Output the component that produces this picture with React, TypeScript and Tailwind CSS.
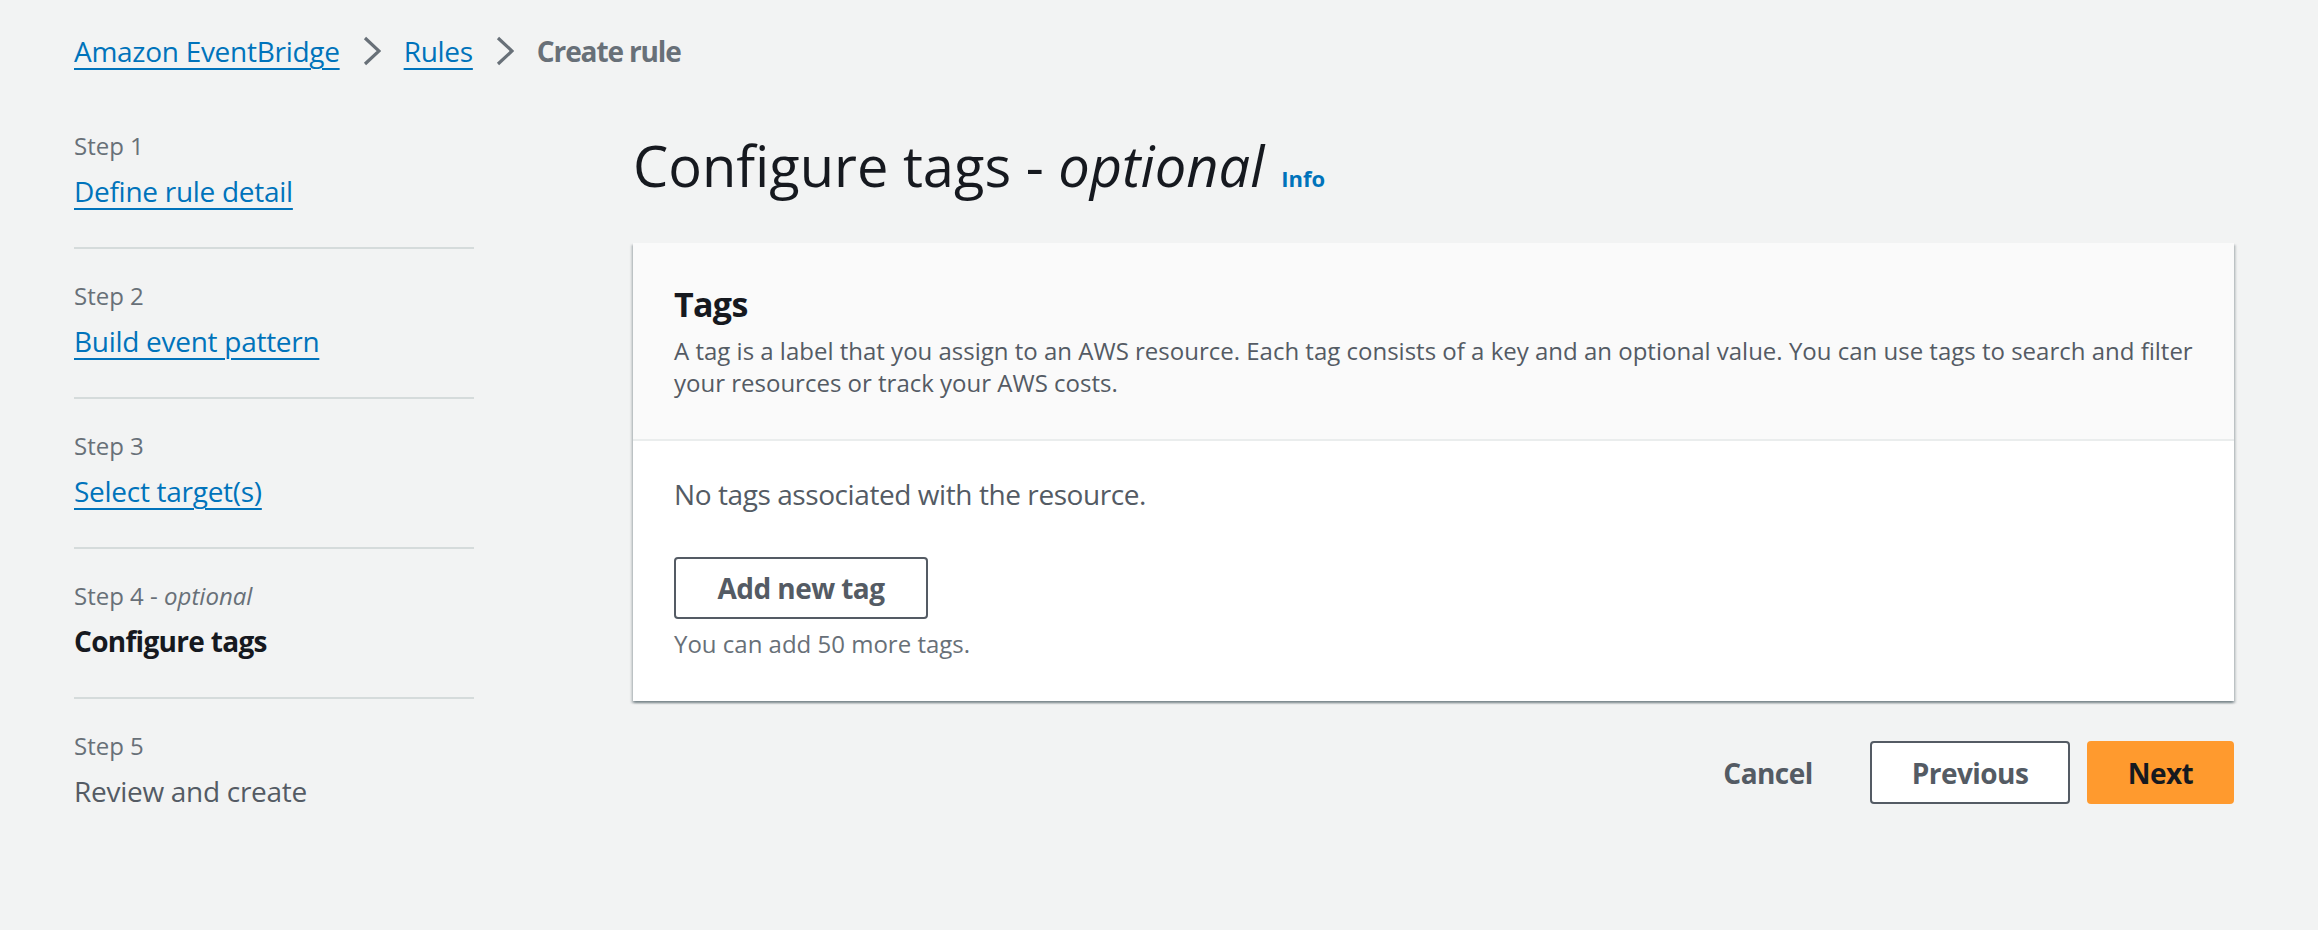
import React from 'react';

const steps = [
  { label: 'Step 1', title: 'Define rule detail', state: 'link' },
  { label: 'Step 2', title: 'Build event pattern', state: 'link' },
  { label: 'Step 3', title: 'Select target(s)', state: 'link' },
  { label: 'Step 4', optional: true, title: 'Configure tags', state: 'active' },
  { label: 'Step 5', title: 'Review and create', state: 'disabled' },
];

function Chevron() {
  return (
    <svg width="18" height="30" viewBox="0 0 18 30" className="mx-[23px] shrink-0">
      <polyline points="2,2 16,15 2,28" fill="none" stroke="#687078" strokeWidth="3.2" />
    </svg>
  );
}

function StepNav() {
  return (
    <nav className="w-[400px] shrink-0">
      {steps.map((s, i) => (
        <div
          key={s.label}
          className={
            (i > 0 ? 'pt-[31px] ' : '') +
            (i < steps.length - 1 ? 'pb-[38px] border-b-2 border-[#d5dbdb]' : '')
          }
        >
          <div className="text-[24px] leading-[32px] text-[#687078]">
            {s.label}
            {s.optional && (
              <>
                {' - '}
                <i>optional</i>
              </>
            )}
          </div>
          <div className="mt-[11px] text-[28px] leading-[36px] tracking-[-0.01em]">
            {s.state === 'link' && (
              <a className="text-[#0073bb] underline decoration-2 underline-offset-[6px] cursor-pointer">
                {s.title}
              </a>
            )}
            {s.state === 'active' && (
              <span className="font-bold text-[#16191f] tracking-[-0.025em]">{s.title}</span>
            )}
            {s.state === 'disabled' && <span className="text-[#545b64]">{s.title}</span>}
          </div>
        </div>
      ))}
    </nav>
  );
}

export default function App() {
  return (
    <div className="min-h-[930px] bg-[#f2f3f3] pl-[74px] pr-[84px] pt-[33px] font-['Open_Sans','Liberation_Sans',sans-serif]">
      {/* breadcrumbs */}
      <div className="flex items-center h-[36px] text-[28px] leading-[36px] tracking-[-0.01em]">
        <a className="text-[#0073bb] underline decoration-2 underline-offset-[6px] cursor-pointer">
          Amazon EventBridge
        </a>
        <Chevron />
        <a className="text-[#0073bb] underline decoration-2 underline-offset-[6px] cursor-pointer">Rules</a>
        <Chevron />
        <span className="font-bold text-[#687078] tracking-[-0.04em]">Create rule</span>
      </div>

      <div className="flex mt-[61px]">
        <StepNav />

        <main className="flex-1 ml-[159px] pt-[3px]">
          <div className="flex items-baseline">
            <h1 className="text-[56px] leading-[64px] text-[#16191f] font-normal">
              Configure tags - <i>optional</i>
            </h1>
            <a className="ml-[17px] text-[22px] font-bold text-[#0073bb] cursor-pointer">Info</a>
          </div>

          <section className="mt-[46px] bg-white shadow-[0_2px_2px_0_rgba(0,28,36,0.3),2px_2px_2px_0_rgba(0,28,36,0.15),-2px_2px_2px_0_rgba(0,28,36,0.15)]">
            <div className="bg-[#fafafa] px-[41px] pt-[39px] pb-[40px] border-b-2 border-[#eaeded]">
              <h2 className="text-[34px] leading-[44px] font-bold text-[#16191f] tracking-[-0.02em]">Tags</h2>
              <p className="mt-[9px] text-[24px] leading-[32px] text-[#545b64]">
                A tag is a label that you assign to an AWS resource. Each tag consists of a key and an optional value. You can use tags to search and filter
                <br />
                your resources or track your AWS costs.
              </p>
            </div>
            <div className="px-[41px] pt-[35px] pb-[41px]">
              <p className="text-[28px] leading-[36px] text-[#545b64] tracking-[-0.015em]">
                No tags associated with the resource.
              </p>
              <button className="mt-[45px] h-[62px] w-[254px] border-2 border-[#545b64] rounded-[4px] bg-white text-[28px] font-bold text-[#545b64] tracking-[-0.02em]">
                Add new tag
              </button>
              <p className="mt-[9px] text-[24px] leading-[32px] text-[#687078]">You can add 50 more tags.</p>
            </div>
          </section>

          <div className="flex justify-end items-center gap-[17px] mt-[40px] text-[28px] font-bold tracking-[-0.02em]">
            <button className="h-[63px] w-[170px] text-[#545b64]">Cancel</button>
            <button className="h-[63px] w-[200px] border-2 border-[#545b64] rounded-[4px] bg-white text-[#545b64]">
              Previous
            </button>
            <button className="h-[63px] w-[147px] rounded-[4px] bg-[#ff9a2e] text-[#16191f]">Next</button>
          </div>
        </main>
      </div>
    </div>
  );
}
